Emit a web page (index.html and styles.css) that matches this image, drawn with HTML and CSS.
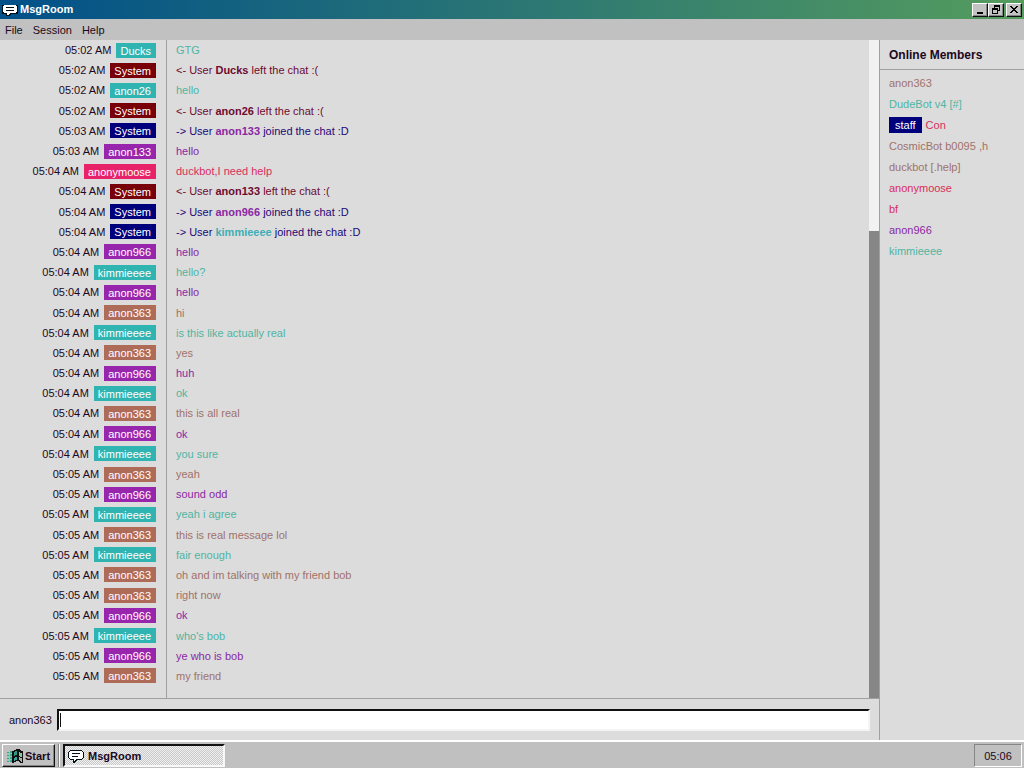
FILE: index.html
```html
<!DOCTYPE html>
<html lang="en">
<head>
<meta charset="utf-8">
<title>MsgRoom</title>
<link rel="stylesheet" href="styles.css">
</head>
<body>
<header class="titlebar">
  <svg class="chat-icon" viewBox="0 0 16 14" shape-rendering="crispEdges" aria-hidden="true"><path class="outline" d="M0 2h16v9H9v1H8v1H4v-2H0z"/><path class="bubble" d="M2 2h12v1h1v6h-1v1H8v1H7v1H5v-2H2V9H1V3h1z"/><path class="outline" d="M4 4h8v1H4zM4 7h8v1H4z"/></svg>
  <h1 class="title">MsgRoom</h1>
  <div class="window-buttons">
    <button class="win-btn" aria-label="Minimize"><svg viewBox="0 0 12 10" shape-rendering="crispEdges"><path d="M3 7h6v2H3z"/></svg></button>
    <button class="win-btn" aria-label="Restore"><svg viewBox="0 0 12 10" shape-rendering="crispEdges"><path fill-rule="evenodd" d="M4 0h6v6H8v3H2V3h2zM5 2v1h3v2h1V2zM3 5v3h4V5z"/></svg></button>
    <button class="win-btn close" aria-label="Close"><svg viewBox="0 0 12 10" shape-rendering="crispEdges"><path d="M2 1h2v1h1v1h2V2h1V1h2v1H9v1H8v1H7v1h1v1h1v1h1v1H8V7H7V6H5v1H4v1H2V7h1V6h1V5h1V4H4V3H3V2H2z"/></svg></button>
  </div>
</header>
<nav class="menubar">
  <button class="menu">File</button>
  <button class="menu">Session</button>
  <button class="menu">Help</button>
</nav>
<main class="content">
  <section class="chat">
    <div class="history">
      <ol class="messages">
        <li class="row teal"><div class="who"><time>05:02 AM</time><span class="badge">Ducks</span></div><p class="text">GTG</p></li>
        <li class="row left"><div class="who"><time>05:02 AM</time><span class="badge">System</span></div><p class="text">&lt;- User <b>Ducks</b> left the chat :(</p></li>
        <li class="row teal"><div class="who"><time>05:02 AM</time><span class="badge">anon26</span></div><p class="text">hello</p></li>
        <li class="row left"><div class="who"><time>05:02 AM</time><span class="badge">System</span></div><p class="text">&lt;- User <b>anon26</b> left the chat :(</p></li>
        <li class="row joined"><div class="who"><time>05:03 AM</time><span class="badge">System</span></div><p class="text">-&gt; User <b class="purple">anon133</b> joined the chat :D</p></li>
        <li class="row purple"><div class="who"><time>05:03 AM</time><span class="badge">anon133</span></div><p class="text">hello</p></li>
        <li class="row pink"><div class="who"><time>05:04 AM</time><span class="badge">anonymoose</span></div><p class="text">duckbot,I need help</p></li>
        <li class="row left"><div class="who"><time>05:04 AM</time><span class="badge">System</span></div><p class="text">&lt;- User <b>anon133</b> left the chat :(</p></li>
        <li class="row joined"><div class="who"><time>05:04 AM</time><span class="badge">System</span></div><p class="text">-&gt; User <b class="purple">anon966</b> joined the chat :D</p></li>
        <li class="row joined"><div class="who"><time>05:04 AM</time><span class="badge">System</span></div><p class="text">-&gt; User <b class="teal">kimmieeee</b> joined the chat :D</p></li>
        <li class="row purple"><div class="who"><time>05:04 AM</time><span class="badge">anon966</span></div><p class="text">hello</p></li>
        <li class="row teal"><div class="who"><time>05:04 AM</time><span class="badge">kimmieeee</span></div><p class="text">hello?</p></li>
        <li class="row purple"><div class="who"><time>05:04 AM</time><span class="badge">anon966</span></div><p class="text">hello</p></li>
        <li class="row brown"><div class="who"><time>05:04 AM</time><span class="badge">anon363</span></div><p class="text">hi</p></li>
        <li class="row teal"><div class="who"><time>05:04 AM</time><span class="badge">kimmieeee</span></div><p class="text">is this like actually real</p></li>
        <li class="row brown"><div class="who"><time>05:04 AM</time><span class="badge">anon363</span></div><p class="text">yes</p></li>
        <li class="row purple"><div class="who"><time>05:04 AM</time><span class="badge">anon966</span></div><p class="text">huh</p></li>
        <li class="row teal"><div class="who"><time>05:04 AM</time><span class="badge">kimmieeee</span></div><p class="text">ok</p></li>
        <li class="row brown"><div class="who"><time>05:04 AM</time><span class="badge">anon363</span></div><p class="text">this is all real</p></li>
        <li class="row purple"><div class="who"><time>05:04 AM</time><span class="badge">anon966</span></div><p class="text">ok</p></li>
        <li class="row teal"><div class="who"><time>05:04 AM</time><span class="badge">kimmieeee</span></div><p class="text">you sure</p></li>
        <li class="row brown"><div class="who"><time>05:05 AM</time><span class="badge">anon363</span></div><p class="text">yeah</p></li>
        <li class="row purple"><div class="who"><time>05:05 AM</time><span class="badge">anon966</span></div><p class="text">sound odd</p></li>
        <li class="row teal"><div class="who"><time>05:05 AM</time><span class="badge">kimmieeee</span></div><p class="text">yeah i agree</p></li>
        <li class="row brown"><div class="who"><time>05:05 AM</time><span class="badge">anon363</span></div><p class="text">this is real message lol</p></li>
        <li class="row teal"><div class="who"><time>05:05 AM</time><span class="badge">kimmieeee</span></div><p class="text">fair enough</p></li>
        <li class="row brown"><div class="who"><time>05:05 AM</time><span class="badge">anon363</span></div><p class="text">oh and im talking with my friend bob</p></li>
        <li class="row brown"><div class="who"><time>05:05 AM</time><span class="badge">anon363</span></div><p class="text">right now</p></li>
        <li class="row purple"><div class="who"><time>05:05 AM</time><span class="badge">anon966</span></div><p class="text">ok</p></li>
        <li class="row teal"><div class="who"><time>05:05 AM</time><span class="badge">kimmieeee</span></div><p class="text">who's bob</p></li>
        <li class="row purple"><div class="who"><time>05:05 AM</time><span class="badge">anon966</span></div><p class="text">ye who is bob</p></li>
        <li class="row brown"><div class="who"><time>05:05 AM</time><span class="badge">anon363</span></div><p class="text">my friend</p></li>
      </ol>
      <div class="scrollbar"><div class="thumb"></div></div>
    </div>
    <form class="composer">
      <label for="message">anon363</label>
      <input id="message" class="field" type="text" autocomplete="off">
    </form>
  </section>
  <aside class="members">
    <h2 class="members-title">Online Members</h2>
    <ul class="member-list">
      <li class="brown">anon363</li>
      <li class="teal">DudeBot v4 [#]</li>
      <li class="pink"><span class="staff">staff</span>Con</li>
      <li class="brown">CosmicBot b0095 ,h</li>
      <li class="brown">duckbot [.help]</li>
      <li class="pink">anonymoose</li>
      <li class="pink">bf</li>
      <li class="purple">anon966</li>
      <li class="teal">kimmieeee</li>
    </ul>
  </aside>
</main>
<footer class="taskbar">
  <button class="start"><svg class="flag" viewBox="0 0 18 16" shape-rendering="crispEdges" aria-hidden="true"><path class="haze" d="M1 4h5v10H1z"/><path class="dash" d="M1 4h2v1H1zM4 3h2v2H4zM1 7h2v1H1zM4 6h2v2H4zM1 10h2v1H1zM4 9h2v2H4zM1 13h2v1H1zM4 12h2v2H4z"/><path class="frame" d="M6 3h2V2h2V1h4v1h1v1h2v12h-3v-1h-1v-1h-3v1H8v1H6z"/><path class="pane-a" d="M8 4h1V3h2v4H9v1H8z"/><path class="pane-b" d="M13 4h1v1h2v4h-2V8h-1z"/><path class="pane-c" d="M8 10h1V9h2v3H9v1H8z"/><path class="pane-d" d="M13 9h1v1h2v4h-1v-1h-1v-1h-1z"/></svg>Start</button>
  <span class="divider"></span>
  <button class="task"><svg class="chat-icon" viewBox="0 0 16 14" shape-rendering="crispEdges" aria-hidden="true"><path class="outline" d="M2 1h12v1h1v1h1v6h-1v1h-1v1H9v1H8v1H7v1H5v-3H2v-1H1V9H0V3h1V2h1z"/><path class="bubble" d="M2 2h12v1h1v6h-1v1H8v1H7v1H6v-2H2V9H1V3h1z"/><path class="outline" d="M4 4h8v1H4zM4 7h6v1H4z"/></svg>MsgRoom</button>
  <time class="clock">05:06</time>
</footer>
</body>
</html>
```
FILE: styles.css
```css
* { box-sizing: border-box; }

body {
  margin: 0;
  height: 100vh;
  display: flex;
  flex-direction: column;
  background: #dcdcdc;
  color: #1c0820;
  font: 11px/14px "Liberation Sans", Arial, sans-serif;
}

button, input { font: inherit; color: inherit; }
button { padding: 0; border: 0; background: none; }
h1, h2, p, ol, ul { margin: 0; padding: 0; }
ol, ul { list-style: none; }

.titlebar {
  display: flex;
  align-items: center;
  height: 19px;
  padding: 0 2px;
  background: linear-gradient(90deg, #00508a, #559c5e);
  color: #fff;
}
.title { flex: 1; padding: 0 0 2px 2px; font-size: 11px; line-height: 14px; }
.chat-icon { width: 16px; height: 14px; flex: none; }
.outline { fill: #001018; }
.bubble { fill: #fff; }

.window-buttons { display: flex; }
.win-btn {
  display: grid;
  place-items: center;
  width: 16px;
  height: 14px;
  background: #c3c3c3;
  border: 1px solid #fff;
  border-right-color: #111;
  border-bottom-color: #111;
  box-shadow: inset -1px -1px #858585;
}
.win-btn svg { width: 12px; height: 10px; }
.close { margin-left: 2px; }

.menubar {
  display: flex;
  gap: 10px;
  height: 21px;
  padding: 0 5px;
  background: #c1c1c1;
}

.content { flex: 1; display: flex; min-height: 0; }
.chat { flex: 1; display: flex; flex-direction: column; }
.history { flex: 1; display: flex; border-bottom: 1px solid #a0a0a0; }
.messages {
  flex: 1;
  display: grid;
  grid-auto-rows: 1fr;
  padding-bottom: 12px;
  background: linear-gradient(#a0a0a0, #a0a0a0) 166px 0 / 1px 100% no-repeat;
}
.row {
  display: grid;
  grid-template-columns: 156px 1fr;
  column-gap: 20px;
  align-items: center;
}
.who {
  display: flex;
  justify-content: flex-end;
  align-items: center;
  gap: 5px;
  color: #1c0820;
}
.badge { padding: 1px 5px 0 4px; color: #fff; }

.teal { color: #4fb5a2; }
.purple { color: #8a28a4; }
.pink { color: #d82e5c; }
.brown { color: #a0726a; }
.left { color: #6e0a30; }
.joined { color: #1c0878; }
b.teal { color: #40aeb4; }

.teal .badge { background: #30b4b2; }
.purple .badge { background: #9826ac; }
.pink .badge { background: #e82268; }
.brown .badge { background: #ae6b58; }
.left .badge { background: #780008; }
.joined .badge { background: #00007c; }

.scrollbar {
  width: 10px;
  display: flex;
  flex-direction: column;
  justify-content: flex-end;
  background: #f2f2f2;
}
.thumb { height: 71%; background: #868686; }

.composer {
  display: flex;
  align-items: center;
  gap: 5px;
  height: 41px;
  padding: 0 9px;
}
/* The 1px gradient is the text caret. */
.field {
  flex: 1;
  min-width: 0;
  height: 22px;
  padding: 0 2px;
  background: #fff linear-gradient(#111, #111) 1px 50% / 1px 14px no-repeat;
  border: 2px solid #111;
  border-right-color: #f4f4f4;
  border-bottom-color: #f4f4f4;
  outline: 0;
  caret-color: transparent;
}

.members { width: 145px; border-left: 1px solid #a0a0a0; }
.members-title {
  padding: 8px 9px 7px;
  border-bottom: 1px solid #a0a0a0;
  font-size: 12px;
  line-height: 14px;
}
.member-list { padding: 2px 9px; }
.member-list li { display: flex; align-items: center; height: 21px; }
.staff {
  margin-right: 4px;
  padding: 1px 6px;
  background: #00007c;
  color: #fff;
}

.taskbar {
  display: flex;
  gap: 3px;
  height: 28px;
  padding: 2px 2px 1px;
  border-top: 2px solid #fff;
  background: #c0c0c0;
}
.start {
  display: flex;
  align-items: center;
  gap: 1px;
  padding: 0 4px 0 3px;
  border: 1px solid #fff;
  border-right-color: #111;
  border-bottom-color: #111;
  box-shadow: inset -1px -1px #858585;
  font-weight: bold;
}
.flag { width: 18px; height: 16px; }
.frame { fill: #111; }
.haze { fill: #8fc8b4; }
.dash { fill: #3aa78a; }
.pane-a { fill: #2f9b84; }
.pane-b { fill: #8fc4a0; }
.pane-c { fill: #3ca4a0; }
.pane-d { fill: #a3b8a0; }
.divider { width: 2px; border-left: 1px solid #858585; background: #fff; }
.task {
  display: flex;
  align-items: center;
  gap: 4px;
  width: 162px;
  padding: 0 3px;
  border: 2px solid #111;
  border-right-color: #f8f8f8;
  border-bottom-color: #f8f8f8;
  background: repeating-conic-gradient(#f0f0f0 0 25%, #c8c8c8 0 50%) 0 0 / 2px 2px;
  font-weight: bold;
}
.clock {
  display: grid;
  place-items: center;
  width: 48px;
  margin-left: auto;
  border: 1px solid #858585;
  border-right-color: #fff;
  border-bottom-color: #fff;
}
```
